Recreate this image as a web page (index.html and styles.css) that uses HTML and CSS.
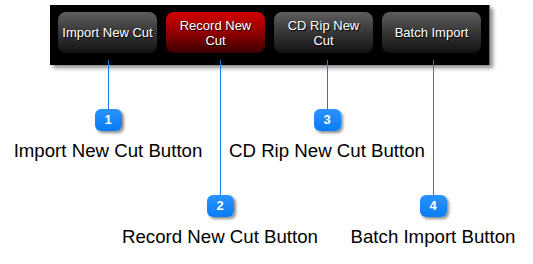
FILE: index.html
```html
<!DOCTYPE html>
<html>
<head>
<meta charset="utf-8">
<link rel="stylesheet" href="styles.css">
</head>
<body>
<div class="canvas">
  <div class="toolbar">
    <div class="btn">Import New Cut</div>
    <div class="btn btn-red">Record New<br>Cut</div>
    <div class="btn">CD Rip New<br>Cut</div>
    <div class="btn">Batch Import</div>
  </div>

  <div class="callout callout-high" style="left:-2px">
    <div class="leader"></div>
    <div class="badge">1</div>
    <div class="label">Import New Cut Button</div>
  </div>
  <div class="callout callout-low" style="left:110px">
    <div class="leader"></div>
    <div class="badge">2</div>
    <div class="label">Record New Cut Button</div>
  </div>
  <div class="callout callout-high" style="left:217px">
    <div class="leader"></div>
    <div class="badge">3</div>
    <div class="label">CD Rip New Cut Button</div>
  </div>
  <div class="callout callout-low" style="left:323px">
    <div class="leader"></div>
    <div class="badge">4</div>
    <div class="label">Batch Import Button</div>
  </div>
</div>
</body>
</html>
```

FILE: styles.css
```css
html, body {
  margin: 0;
  padding: 0;
  background: #ffffff;
}

.canvas {
  position: relative;
  width: 533px;
  height: 264px;
  overflow: hidden;
  font-family: "Liberation Sans", Arial, sans-serif;
}

.toolbar {
  margin: 5px 0 0 50px;
  width: 440px;
  height: 60px;
  box-sizing: border-box;
  padding: 7px 8px 0 8px;
  background: #000000;
  border-right: 1px solid #6a6a6a;
  display: flex;
  gap: 9px;
  align-items: flex-start;
  box-shadow: 3px 3px 4px rgba(0, 0, 0, 0.45);
}

.btn {
  width: 99px;
  height: 41px;
  flex: none;
  box-sizing: border-box;
  border-radius: 8px;
  background: linear-gradient(to bottom, #5e5e5e 0%, #3a3a3a 45%, #121212 100%);
  color: #ffffff;
  font-size: 13px;
  line-height: 15px;
  text-align: center;
  display: flex;
  align-items: center;
  justify-content: center;
  text-shadow: 1px 1px 1px #000000;
}

.btn-red {
  background: linear-gradient(to bottom, #d20000 0%, #9a0000 45%, #3a0000 100%);
}

.callout {
  position: absolute;
  top: 60px;
  width: 220px;
  display: flex;
  flex-direction: column;
  align-items: center;
}

.leader {
  width: 1px;
  background: #1e78e6;
}

.callout-high .leader {
  height: 49px;
}

.callout-low .leader {
  height: 135px;
}

.badge {
  width: 27px;
  height: 22px;
  border-radius: 6px;
  background: linear-gradient(to bottom, #2a93ff, #0a7cf5);
  color: #ffffff;
  font-weight: bold;
  font-size: 13px;
  line-height: 22px;
  text-align: center;
  box-shadow: 2px 2px 3px rgba(0, 0, 0, 0.45);
}

.label {
  margin-top: 9px;
  font-size: 14pt;
  line-height: 22px;
  color: #000000;
  white-space: nowrap;
}
```
